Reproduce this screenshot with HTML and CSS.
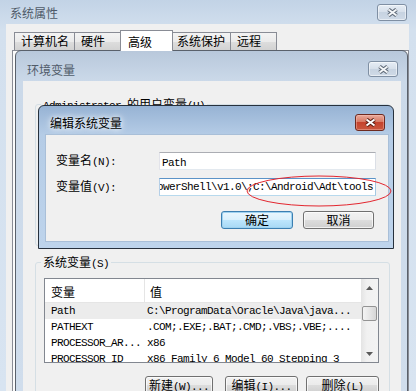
FILE: index.html
```html
<!DOCTYPE html>
<html lang="zh-CN">
<head>
    <meta charset="UTF-8">
    <title>系统属性</title>
    <link rel="stylesheet" href="styles.css">
</head>
<body>
    <!-- 系统属性 -->
    <div class="win outer">
        <div class="titlebar">
            <span class="title">系统属性</span>
            <span class="close">
                <svg width="13" height="9" viewBox="0 0 13 9"><path d="M2.5 1.5 L10.5 7.5 M10.5 1.5 L2.5 7.5" stroke="#5d6876" stroke-width="4"/><path d="M2.5 1.5 L10.5 7.5 M10.5 1.5 L2.5 7.5" stroke="#f4f6f8" stroke-width="2"/></svg>
            </span>
        </div>
        <div class="client">
            <div class="tabs">
                <span class="tab t1">计算机名</span>
                <span class="tab t2">硬件</span>
                <span class="tab t3 active">高级</span>
                <span class="tab t4">系统保护</span>
                <span class="tab t5">远程</span>
            </div>
            <div class="tab-panel"></div>
        </div>
    </div>

    <!-- 环境变量 -->
    <div class="win env">
        <div class="titlebar">
            <span class="title">环境变量</span>
            <span class="close">
                <svg width="13" height="9" viewBox="0 0 13 9"><path d="M2.5 1.5 L10.5 7.5 M10.5 1.5 L2.5 7.5" stroke="#5d6876" stroke-width="4"/><path d="M2.5 1.5 L10.5 7.5 M10.5 1.5 L2.5 7.5" stroke="#f4f6f8" stroke-width="2"/></svg>
            </span>
        </div>
        <div class="client">
            <div class="group user-group">
                <div class="group-title"><span class="m">Administrator </span>的用户变量<span class="m">(U)</span></div>
            </div>
            <div class="group sys-group">
                <div class="group-title">系统变量<span class="m">(S)</span></div>
                <div class="list">
                    <div class="list-body">
                        <div class="list-head">
                            <span class="head-cell">变量</span>
                            <span class="head-cell">值</span>
                        </div>
                        <div class="row sel"><span class="m">Path</span><span class="m val">C:\ProgramData\Oracle\Java\java...</span></div>
                        <div class="row"><span class="m">PATHEXT</span><span class="m val">.COM;.EXE;.BAT;.CMD;.VBS;.VBE;....</span></div>
                        <div class="row"><span class="m">PROCESSOR_AR...</span><span class="m val">x86</span></div>
                        <div class="row"><span class="m">PROCESSOR_ID</span><span class="m val">x86 Family 6 Model 60 Stepping 3</span></div>
                    </div>
                    <div class="vscroll">
                        <div class="arrow"><svg width="7" height="4" viewBox="0 0 7 4"><path d="M3.5 0 L7 4 L0 4Z" fill="#5a5a5a"/></svg></div>
                        <div class="thumb"></div>
                        <div class="track"></div>
                        <div class="arrow"><svg width="7" height="4" viewBox="0 0 7 4"><path d="M0 0 L7 0 L3.5 4Z" fill="#5a5a5a"/></svg></div>
                    </div>
                </div>
                <div class="actions">
                    <span class="btn new">新建<span class="m">(W)...</span></span>
                    <span class="btn">编辑<span class="m">(I)...</span></span>
                    <span class="btn">删除<span class="m">(L)</span></span>
                </div>
            </div>
        </div>
    </div>

    <!-- 编辑系统变量 -->
    <div class="win edit">
        <div class="titlebar">
            <span class="title">编辑系统变量</span>
            <span class="close red">
                <svg width="13" height="9" viewBox="0 0 13 9"><path d="M2.5 1.5 L10.5 7.5 M10.5 1.5 L2.5 7.5" stroke="#5a1d12" stroke-width="4"/><path d="M2.5 1.5 L10.5 7.5 M10.5 1.5 L2.5 7.5" stroke="#ffffff" stroke-width="2"/></svg>
            </span>
        </div>
        <div class="client">
            <div class="form">
                <span class="label">变量名<span class="m">(N):</span></span>
                <div class="field"><span class="m">Path</span></div>
                <span class="label">变量值<span class="m">(V):</span></span>
                <div class="field focus"><span class="m">%SystemRoot%\system32\WindowsPowerShell\v1.0\;C:\Android\Adt\tools</span></div>
            </div>
            <div class="btns">
                <span class="btn default ok">确定</span>
                <span class="btn cancel">取消</span>
            </div>
        </div>
    </div>

    <svg class="mark" width="146" height="32" viewBox="0 0 146 32">
        <ellipse cx="73" cy="16" rx="72" ry="15" fill="none" stroke="#e3262f" stroke-width="1"/>
    </svg>
</body>
</html>
```

FILE: styles.css
```css
body {
    margin: 0;
    width: 416px;
    height: 391px;
    overflow: hidden;
    position: relative;
    font-family: "Noto Sans CJK SC", sans-serif;
    font-size: 12px;
    line-height: 12px;
    color: #000;
    background: #d3e0ee;
}
.m {
    font-family: "Liberation Mono", "Noto Sans CJK SC", monospace;
    font-size: 11px;
    letter-spacing: -0.6px;
}

/* windows */
.win {
    position: absolute;
    box-sizing: border-box;
}
.titlebar {
    display: flex;
    justify-content: space-between;
    align-items: flex-start;
}
.close {
    width: 30px;
    height: 16px;
    box-sizing: border-box;
    border: 1px solid #7f8fa3;
    border-radius: 3px;
    background: linear-gradient(#e6edf5, #d6dfea 50%, #c7d3e1 50%, #cfdae7);
    box-shadow: inset 0 0 0 1px rgba(255,255,255,0.5);
    display: flex;
    align-items: center;
    justify-content: center;
}
.close.red {
    height: 17px;
    border-color: #6e2a1f;
    background: linear-gradient(#e9aa9b, #d87a65 45%, #c5432d 50%, #c9583f);
    box-shadow: inset 0 0 0 1px rgba(255,200,190,0.4);
}

.outer {
    left: 0;
    top: 0;
    width: 416px;
    height: 391px;
    background: linear-gradient(#c2d3e6, #d3e0ee 30px, #d8e4f1);
}
.outer .titlebar {
    height: 24px;
    padding: 0 9px 0 10px;
}
.outer .title {
    margin-top: 7px;
    color: #4f5a68;
}
.outer .close {
    margin-top: 4px;
    height: 17px;
}
.outer .client {
    margin: 0 7px 0 6px;
    height: 367px;
    background: #f0f0f0;
    padding: 6px 0 0 8px;
    box-sizing: border-box;
}
.tabs {
    display: flex;
    align-items: flex-end;
    height: 20px;
}
.tab {
    box-sizing: border-box;
    height: 18px;
    border: 1px solid #898c95;
    border-bottom: none;
    margin-left: -1px;
    padding-left: 6px;
    line-height: 16px;
    background: linear-gradient(#f3f3f3, #ebebeb 50%, #dedede 50%, #d2d2d2);
}
.t1 { width: 61px; margin-left: 0; }
.t2 { width: 47px; }
.t3 { width: 53px; }
.t4 { width: 59px; padding-left: 4px; }
.t5 { width: 47px; }
.tab.active {
    height: 21px;
    margin-bottom: -1px;
    padding-top: 3px;
    padding-left: 7px;
    background: #fff;
    position: relative;
    z-index: 1;
}
.tab-panel {
    margin-left: -2px;
    height: 340px;
    border: 1px solid #898c95;
    background: #fbfbfb;
}

.env {
    left: 15px;
    top: 50px;
    width: 393px;
    height: 345px;
    border: 1px solid #5a616b;
    border-radius: 6px 6px 0 0;
    padding: 0 6px 0 7px;
    background: linear-gradient(#b8c8db, #cbd9e9 30px, #d0ddec);
}
.env .titlebar {
    height: 30px;
    padding: 0 3px 0 4px;
}
.env .title {
    margin-top: 13px;
    color: #505b69;
}
.env .close {
    margin-top: 10px;
}
.env .client {
    height: 320px;
    background: #f0f0f0;
    padding: 23px 11px 0 12px;
    box-sizing: border-box;
}
.group {
    border: 1px solid #d5dfe5;
    border-radius: 3px;
    padding: 0 10px 0 8px;
    box-sizing: border-box;
}
.group-title {
    width: max-content;
    margin: -7px 0 0 -3px;
    padding: 0 2px;
    background: #f0f0f0;
    line-height: 12px;
}
.user-group {
    height: 142px;
    margin-bottom: 16px;
}
.sys-group {
    height: 160px;
}

.list {
    margin-top: 8px;
    height: 85px;
    border: 1px solid #828790;
    background: #fff;
    display: flex;
    box-sizing: border-box;
}
.list-body {
    flex: 1;
    overflow: hidden;
}
.list-head {
    display: grid;
    grid-template-columns: 99px 1fr;
    height: 24px;
    box-sizing: border-box;
    border-bottom: 1px solid #e5e5e5;
}
.head-cell {
    padding: 3px 0 0 6px;
    line-height: 20px;
}
.head-cell + .head-cell {
    border-left: 1px solid #e5e5e5;
    padding-left: 5px;
}
.row {
    display: grid;
    grid-template-columns: 99px 1fr;
    height: 16px;
    line-height: 16px;
    white-space: nowrap;
}
.row .m {
    padding-left: 6px;
    overflow: hidden;
}
.row .val {
    padding-left: 3px;
}
.row.sel {
    background: #ececec;
}
.vscroll {
    width: 17px;
    display: flex;
    flex-direction: column;
    background: linear-gradient(90deg, #e4e4e4, #f1f1f1 35%, #f3f3f3);
}
.arrow {
    height: 17px;
    display: flex;
    align-items: center;
    justify-content: center;
}
.thumb {
    height: 15px;
    margin: 10px 1px 0;
    border: 1px solid #939393;
    border-radius: 2px;
    box-sizing: border-box;
    background: linear-gradient(90deg, #f4f4f4, #e6e6e6 50%, #d6d6d6);
}
.track {
    flex: 1;
}

.btn {
    height: 18px;
    box-sizing: border-box;
    border: 1px solid #707070;
    border-radius: 3px;
    background: linear-gradient(#f2f2f2, #ebebeb 50%, #dddddd 50%, #cfcfcf);
    box-shadow: inset 0 0 0 1px rgba(255,255,255,0.7);
    line-height: 16px;
    text-align: center;
    white-space: nowrap;
}
.btn.default {
    border-color: #3c7fb1;
    background: linear-gradient(#eaf6fd, #d9f0fc 50%, #bee6fd 50%, #a7d9f5);
    box-shadow: inset 0 0 0 1px #9fd2f0;
}
.actions {
    display: flex;
    justify-content: flex-end;
    gap: 8px;
    margin-top: 13px;
}
.actions .btn {
    width: 73px;
}
.actions .new {
    width: 68px;
    margin-right: 4px;
}

.edit {
    left: 38px;
    top: 105px;
    width: 356px;
    height: 144px;
    border: 1px solid #27313d;
    border-radius: 6px 6px 0 0;
    padding: 0 5px 7px 7px;
    background: linear-gradient(#97b3d4, #b5cce6 29px, #bed4ec);
}
.edit .titlebar {
    height: 29px;
    padding: 0 3px 0 4px;
}
.edit .title {
    margin-top: 11px;
    text-shadow: 0 0 5px #fff, 0 0 8px #fff;
}
.edit .close {
    margin-top: 8px;
}
.edit .client {
    height: 106px;
    background: #f0f0f0;
    padding: 17px 12px 0 10px;
    box-sizing: border-box;
    box-shadow: 0 0 0 1px #a9bfd8;
}
.form {
    display: grid;
    grid-template-columns: 103px 217px;
    row-gap: 8px;
    align-items: center;
}
.field {
    height: 18px;
    box-sizing: border-box;
    border: 1px solid;
    border-color: #abadb3 #dbdfe6 #e3e9ef #e2e3ea;
    background: #fff;
    padding: 0 2px;
    line-height: 16px;
    overflow: hidden;
    white-space: nowrap;
}
.field.focus {
    display: flex;
    justify-content: flex-end;
    border-color: #5c93c7 #a4c9e3 #b7d9ed #b5cfe7;
}
.btns {
    display: flex;
    justify-content: flex-end;
    gap: 10px;
    margin-top: 15px;
    padding-right: 2px;
}
.btns .ok { width: 72px; }
.btns .cancel { width: 71px; }

.mark {
    position: absolute;
    left: 246px;
    top: 175px;
    pointer-events: none;
}
```
